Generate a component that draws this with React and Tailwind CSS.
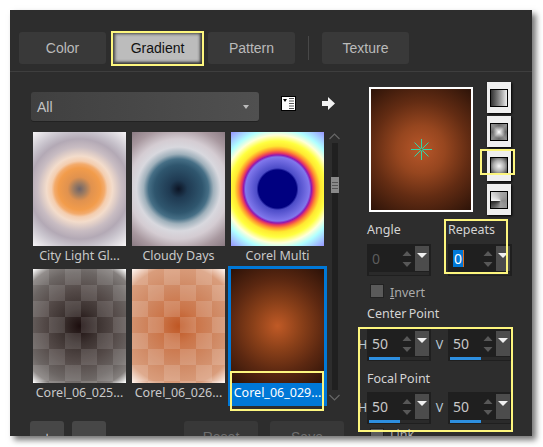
const labelFont = "font-['Noto_Sans',sans-serif]";

const thumbs = [
  {
    label: "City Light Gl...",
    bg: "bg-[radial-gradient(circle_at_center,#6e6468_0,#a07c60_6px,#e0924f_12px,#f29c4b_21px,#f3ab6c_25px,#f4cdae_28px,#f3dccb_33px,#c8bcc2_42px,#b3a9b5_50px,#c8c3cc_58px,#f5f3f5_73px)]",
  },
  {
    label: "Cloudy Days",
    bg: "bg-[radial-gradient(circle_at_center,#0c1424_0,#1f3a52_9px,#2f566e_24px,#466f86_30px,#9fb0bb_35px,#d8d8de_42px,#d4ccd2_50px,#a8989f_62px,#8c7c84_73px)]",
  },
  {
    label: "Corel Multi",
    bg: "bg-[radial-gradient(circle_at_center,#000080_0,#000080_19px,#4c4cc8_21px,#8078ec_32px,#9018b0_34px,#e83860_36px,#ff9030_39px,#ffe830_43px,#ffff40_48px,#ffffd8_54px,#b0ffff_60px,#9898ff_73px)]",
  },
  {
    label: "Corel_06_025...",
    bg: "[background-image:conic-gradient(#0000_25%,#ffffff1c_0_50%,#0000_0_75%,#ffffff1c_0),radial-gradient(circle_at_center,#1c0e0e_0,#3c3230_18px,#544a48_36px,#6c6664_54px,#85807e_64px,#ffffff_73px)] [background-size:32px_32px,100%_100%]",
  },
  {
    label: "Corel_06_026...",
    bg: "[background-image:conic-gradient(#0000_25%,#ffffff24_0_50%,#0000_0_75%,#ffffff24_0),radial-gradient(circle_at_center,#bf5724_0,#cb7549_18px,#d08a65_40px,#d99d7c_60px,#fff4ee_73px)] [background-size:32px_32px,100%_100%]",
  },
  {
    label: "Corel_06_029...",
    selected: true,
    bg: "bg-[radial-gradient(circle_at_center,#c05a26_0,#8a4019_24px,#5c2811_46px,#2c1208_73px)]",
  },
];

function Tab({ children, active }) {
  return (
    <div
      className={
        active
          ? "flex h-[32px] w-[89px] items-center justify-center bg-[#bcbcbc] text-[14px] text-[#111] shadow-[inset_2px_2px_3px_#444,inset_-2px_-2px_3px_#333]"
          : "flex h-[32px] w-[87px] items-center justify-center rounded-[3px] bg-[#393939] text-[14px] text-[#bbb]"
      }
    >
      {children}
    </div>
  );
}

function Arrows() {
  return (
    <svg width="12" height="20" viewBox="0 0 12 20" className="shrink-0">
      <path d="M6 2 10.5 7H1.5Z" fill="#585858" />
      <path d="M6 18 1.5 13H10.5Z" fill="#585858" />
    </svg>
  );
}

function Spinner({ value, disabled, selected, bar }) {
  return (
    <div className="flex h-[32px] w-[64px] flex-col overflow-hidden bg-[#1f1f1f] px-[2px] pt-[2px]">
      <div className="flex h-[25px] items-center">
        <div className="flex flex-1 items-center pl-[3px]">
          <span
            className={
              selected
                ? "border-r border-[#e07020] bg-[#0078d7] px-px text-[14px] leading-[17px] text-white"
                : disabled
                  ? "text-[14px] text-[#5c5c5c]"
                  : "text-[14px] text-[#c8c8c8]"
            }
          >
            {value}
          </span>
        </div>
        <Arrows />
        <div className="ml-[2px] flex h-[25px] w-[14px] shrink-0 justify-center bg-[#4c4c4c] pt-[7px]">
          <svg width="10" height="6" viewBox="0 0 10 6">
            <path d="M0 0H10L5 5Z" fill="#f0f0f0" />
          </svg>
        </div>
      </div>
      <div className="mt-px h-[3px] bg-[#2a2a2a]">
        {bar && <div className="h-full w-[31px] bg-[#2d8fe0]" />}
      </div>
    </div>
  );
}

function ShapeButton({ swatch }) {
  return (
    <div className="flex h-[31px] w-[24px] items-center justify-center bg-[#efefef] shadow-[1px_1px_2px_#000]">
      <div className={"h-[18px] w-[18px] border border-black " + swatch} />
    </div>
  );
}

function Checkbox() {
  return <div className="h-[14px] w-[14px] border border-[#222] bg-[#5a5a5a]" />;
}

function Highlight({ className }) {
  return <div className={"absolute border-2 border-[#fdf67e] " + className} />;
}

export default function App() {
  return (
    <div className="h-[447px] w-[543px] overflow-hidden bg-white font-['Liberation_Sans',sans-serif]">
      <div className="relative ml-[10px] mt-[10px] h-[426px] w-[522px] bg-[#2d2d2d] shadow-[4px_4px_6px_rgba(0,0,0,0.55)]">
        <div className="h-full overflow-hidden">
          {/* tabs */}
          <div className="flex h-[62px] items-start gap-[4px] border-b border-[#3e3e3e] pl-[9px] pt-[22px]">
            <Tab>Color</Tab>
            <div className="ml-[3px]">
              <Tab active>Gradient</Tab>
            </div>
            <div className="ml-[2px]">
              <Tab>Pattern</Tab>
            </div>
            <div className="mx-[9px] mt-[4px] h-[24px] w-px bg-[#484848]" />
            <Tab>Texture</Tab>
          </div>

          <div className="flex">
            {/* library side */}
            <div className="w-[348px] shrink-0 pl-[20px]">
              <div className="ml-px mt-[20px] flex items-center">
                <div className="flex h-[29px] w-[228px] items-center justify-between rounded-[3px] bg-gradient-to-r from-[#404040] to-[#505050] pl-[6px] pr-[10px] text-[14px] text-[#c4c4c4] shadow-[0_1px_0_#222]">
                  <span className="pt-px">All</span>
                  <svg width="6" height="4" viewBox="0 0 6 4">
                    <path d="M0 0H6L3 4Z" fill="#bbb" />
                  </svg>
                </div>
                <svg width="15" height="15" viewBox="0 0 15 15" className="mb-[6px] ml-[22px]">
                  <rect width="15" height="15" fill="#000" />
                  <rect x="1" y="1" width="13" height="13" fill="#fff" />
                  <path d="M2 3H6L4 6Z" fill="#000" />
                  <path d="M8 2.5H13M8 5H13M8 7.5H13M8 10H13M8 12.5H13" stroke="#555" strokeWidth="1" />
                </svg>
                <svg width="13" height="13" viewBox="0 0 13 13" className="mb-[6px] ml-[26px]">
                  <path d="M0 4H6V0L13 6.5 6 13V9H0Z" fill="#f2f2f2" />
                </svg>
              </div>

              <div className="mt-[11px] flex">
                <div className={"ml-[3px] grid w-[291px] grid-cols-[93px_93px_93px] gap-x-[6px] gap-y-[3px] text-[12.5px] text-[#c9c9c9] " + labelFont}>
                  {thumbs.map((t) => (
                    <div
                      key={t.label}
                      className={t.selected ? "outline-3 outline-[#0078d7]" : ""}
                    >
                      <div className={"h-[114px] w-[93px] " + t.bg} />
                      <div
                        className={
                          t.selected
                            ? "flex h-[20px] items-center justify-center whitespace-nowrap bg-[#0078d7] text-white"
                            : "flex h-[20px] items-center justify-center whitespace-nowrap"
                        }
                      >
                        {t.label}
                      </div>
                    </div>
                  ))}
                </div>

                {/* scrollbar */}
                <div className="ml-[6px] flex w-[9px] flex-col items-center">
                  <svg width="11" height="7" viewBox="0 0 11 7" className="mt-[1px] shrink-0">
                    <path d="M0.5 6 5.5 1 10.5 6" fill="none" stroke="#666" strokeWidth="1.2" />
                  </svg>
                  <div className="mt-[3px] h-[247px] w-[6px] bg-[#202020] pt-[34px]">
                    <div className="-ml-[1px] flex h-[16px] w-[8px] flex-col justify-center gap-[2px] bg-[#8a8a8a] px-[1px]">
                      <div className="h-px bg-[#555]" />
                      <div className="h-px bg-[#555]" />
                      <div className="h-px bg-[#555]" />
                    </div>
                  </div>
                  <svg width="11" height="7" viewBox="0 0 11 7" className="mt-[4px] shrink-0">
                    <path d="M0.5 1 5.5 6 10.5 1" fill="none" stroke="#666" strokeWidth="1.2" />
                  </svg>
                </div>
              </div>

              <div className="mt-[18px] flex items-start text-[14px]">
                <div className="flex h-[32px] w-[34px] items-center justify-center rounded-[3px] bg-[#474747] text-[#ccc]">+</div>
                <div className="ml-[8px] flex h-[32px] w-[34px] items-center justify-center rounded-[3px] bg-[#474747] text-[#ccc]">-</div>
                <div className="ml-[78px] flex h-[32px] w-[74px] items-center justify-center rounded-[3px] bg-[#383838] text-[#6e6e6e]">Reset</div>
                <div className="ml-[12px] flex h-[32px] w-[74px] items-center justify-center rounded-[3px] bg-[#383838] text-[#6e6e6e]">Save</div>
              </div>
            </div>

            {/* settings side */}
            <div className={"flex-1 text-[12.5px] text-[#d4d4d4] [word-spacing:-1px] " + labelFont}>
              <div className="mt-[10px] flex items-start pl-[11px]">
                <div className="mt-[5px] flex h-[125px] w-[104px] items-center justify-center border-2 border-white bg-[radial-gradient(circle_at_center,#b8572a_0,#96461f_24px,#632c13_48px,#2a1208_80px)]">
                  <svg width="21" height="21" viewBox="0 0 21 21">
                    <path d="M10.5 0V21M0 10.5H21M3.5 3.5 17.5 17.5M17.5 3.5 3.5 17.5" stroke="#2fd8a8" strokeWidth="1" />
                    <circle cx="10.5" cy="10.5" r="1.5" fill="#8a5a30" stroke="#2fd8a8" strokeWidth="0.8" />
                  </svg>
                </div>
                <div className="ml-[14px] flex flex-col gap-[3px]">
                  <ShapeButton swatch="bg-gradient-to-r from-[#333] to-[#eee]" />
                  <ShapeButton swatch="[background-image:radial-gradient(circle,#ffffff_0,#ffffff00_55%),conic-gradient(#6a6a6a,#8e8e8e_12.5%,#6a6a6a_25%,#8e8e8e_37.5%,#6a6a6a_50%,#8e8e8e_62.5%,#6a6a6a_75%,#8e8e8e_87.5%,#6a6a6a)]" />
                  <ShapeButton swatch="bg-[radial-gradient(circle,#f8f8f8_0,#aaa_50%,#333_100%)]" />
                  <ShapeButton swatch="bg-[conic-gradient(from_270deg_at_60%_55%,#f4f4f4,#a8a8a8_25%,#8a8a8a_50%,#a0a0a0_75%,#222)]" />
                </div>
              </div>

              <div className="grid h-[29px] grid-cols-[9px_64px_17px_64px] items-center pt-px">
                <span className="col-start-2">Angle</span>
                <span className="col-start-4">Repeats</span>
              </div>
              <div className="grid grid-cols-[9px_64px_17px_64px]">
                <div className="col-start-2">
                  <Spinner value="0" disabled />
                </div>
                <div className="col-start-4">
                  <Spinner value="0" selected />
                </div>
              </div>

              <div className="mt-[8px] flex h-[14px] items-center gap-[6px] pl-[12px]">
                <Checkbox />
                <span className="pt-[4px] text-[#aaa]">
                  <span className="underline">I</span>nvert
                </span>
              </div>

              <div className="mt-[6px] flex h-[20px] items-center pl-[9px] pt-px">Center Point</div>
              <div className="mt-[5px] grid grid-cols-[9px_64px_17px_64px] items-center text-[#b9c8d4]">
                <span>H</span>
                <Spinner value="50" bar />
                <span className="text-center">V</span>
                <Spinner value="50" bar />
              </div>

              <div className="mt-[7px] flex h-[20px] items-center pl-[9px] pt-[2px]">Focal Point</div>
              <div className="mt-[4px] grid grid-cols-[9px_64px_17px_64px] items-center text-[#b9c8d4]">
                <span>H</span>
                <Spinner value="50" bar />
                <span className="text-center">V</span>
                <Spinner value="50" bar />
              </div>

              <div className="mt-[4px] flex h-[14px] items-center gap-[6px] pl-[12px]">
                <Checkbox />
                <span className="text-[#aaa]">Link</span>
              </div>
            </div>
          </div>
        </div>

        {/* yellow annotations drawn over the dialog */}
        <Highlight className="left-[101px] top-[21px] h-[35px] w-[93px]" />
        <Highlight className="left-[220px] top-[361px] h-[40px] w-[94px]" />
        <Highlight className="left-[470px] top-[139px] h-[26px] w-[35px]" />
        <Highlight className="left-[434px] top-[209px] h-[55px] w-[64px]" />
        <Highlight className="left-[348px] top-[317px] h-[105px] w-[155px]" />
      </div>
    </div>
  );
}
